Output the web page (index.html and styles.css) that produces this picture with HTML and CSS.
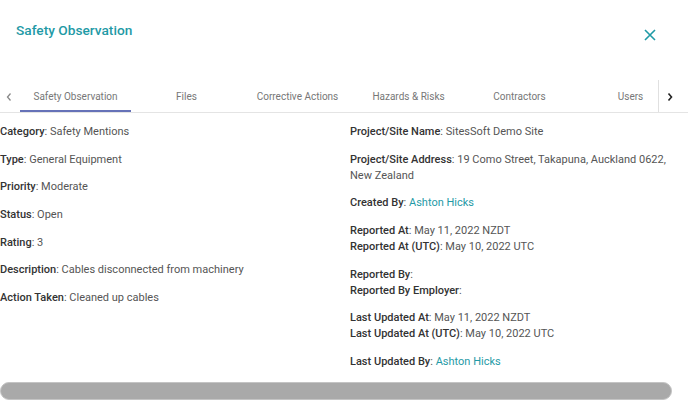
FILE: index.html
```html
<!DOCTYPE html>
<html lang="en">
<head>
  <meta charset="UTF-8">
  <meta name="viewport" content="width=device-width, initial-scale=1.0">
  <title>Safety Observation</title>
  <link rel="stylesheet" href="styles.css">
</head>
<body>
  <div class="dialog">
    <div class="dialog-header">
      <h1 class="dialog-title">Safety Observation</h1>
      <button class="close-btn" aria-label="Close">
        <svg width="12" height="12" viewBox="0 0 12 12"><path d="M1 1 L11 11 M11 1 L1 11" stroke="#1f9aa6" stroke-width="1.6" fill="none"/></svg>
      </button>
    </div>

    <div class="tabs">
      <button class="tab-arrow left">
        <svg width="8" height="10" viewBox="0 0 8 10"><path d="M5.5 1.5 L2.5 5 L5.5 8.5" stroke="#888" stroke-width="1.3" fill="none"/></svg>
      </button>
      <div class="tab-scroller">
        <div class="tab active">Safety Observation</div>
        <div class="tab">Files</div>
        <div class="tab">Corrective Actions</div>
        <div class="tab">Hazards &amp; Risks</div>
        <div class="tab">Contractors</div>
        <div class="tab">Users</div>
      </div>
      <button class="tab-arrow right">
        <svg width="8" height="10" viewBox="0 0 8 10"><path d="M2.5 1.5 L5.5 5 L2.5 8.5" stroke="#222" stroke-width="1.6" fill="none"/></svg>
      </button>
    </div>

    <div class="details">
      <div class="col">
        <p><b>Category</b>: Safety Mentions</p>
        <p><b>Type</b>: General Equipment</p>
        <p><b>Priority</b>: Moderate</p>
        <p><b>Status</b>: Open</p>
        <p><b>Rating</b>: 3</p>
        <p><b>Description</b>: Cables disconnected from machinery</p>
        <p><b>Action Taken</b>: Cleaned up cables</p>
      </div>
      <div class="col">
        <p><b>Project/Site Name</b>: SitesSoft Demo Site</p>
        <p><b>Project/Site Address</b>: 19 Como Street, Takapuna, Auckland 0622, New Zealand</p>
        <p><b>Created By</b>: <a href="#">Ashton Hicks</a></p>
        <p><b>Reported At</b>: May 11, 2022 NZDT<br><b>Reported At (UTC)</b>: May 10, 2022 UTC</p>
        <p><b>Reported By</b>:<br><b>Reported By Employer</b>:</p>
        <p><b>Last Updated At</b>: May 11, 2022 NZDT<br><b>Last Updated At (UTC)</b>: May 10, 2022 UTC</p>
        <p><b>Last Updated By</b>: <a href="#">Ashton Hicks</a></p>
      </div>
    </div>

    <div class="scrollbar"></div>
  </div>
</body>
</html>
```

FILE: styles.css
```css
body {
  margin: 0;
  background: #fff;
  font-family: Roboto, "Noto Sans", sans-serif;
  color: #555;
  overflow: hidden;
}
.dialog {
  width: 688px;
  height: 418px;
}
.dialog-header {
  display: flex;
  justify-content: space-between;
  align-items: flex-start;
  height: 80px;
}
.dialog-title {
  margin: 22px 0 0 16px;
  font-size: 13.7px;
  font-weight: 500;
  color: #1f9aa6;
}
.close-btn {
  margin: 29px 32px 0 0;
  padding: 0;
  border: none;
  background: none;
  width: 12px;
  height: 12px;
}
.tabs {
  display: flex;
  height: 32px;
  border-bottom: 1px solid #e4e4e4;
}
.tab-arrow {
  border: none;
  background: none;
  padding: 0;
  display: flex;
  align-items: center;
  justify-content: center;
}
.tab-arrow.left {
  width: 20px;
  padding: 1px 2px 0 0;
}
.tab-arrow.right {
  width: 30px;
  border-left: 1px solid #e0e0e0;
  padding: 1px 8px 0 0;
}
.tab-scroller {
  flex: 1;
  display: flex;
  overflow: hidden;
}
.tab {
  flex: 0 0 111px;
  text-align: center;
  font-size: 10px;
  line-height: 31px;
  padding-top: 1px;
  box-sizing: border-box;
  color: #777;
  border-bottom: 2px solid transparent;
}
.tab.active {
  border-bottom-color: #6672b8;
}
.details {
  display: grid;
  grid-template-columns: 350px 1fr;
  padding-top: 11px;
  font-size: 11px;
  line-height: 16px;
}
.details .col + .col {
  padding-right: 12px;
}
.details p {
  margin: 0 0 11.7px;
}
.details b {
  font-weight: 500;
  color: #333;
}
.details a {
  color: #1f9aa6;
  text-decoration: none;
}
.scrollbar {
  width: 672px;
  height: 18px;
  background: #a9a9a9;
  border: 1px solid #c4c4c4;
  border-radius: 9px;
  box-sizing: border-box;
}
```
